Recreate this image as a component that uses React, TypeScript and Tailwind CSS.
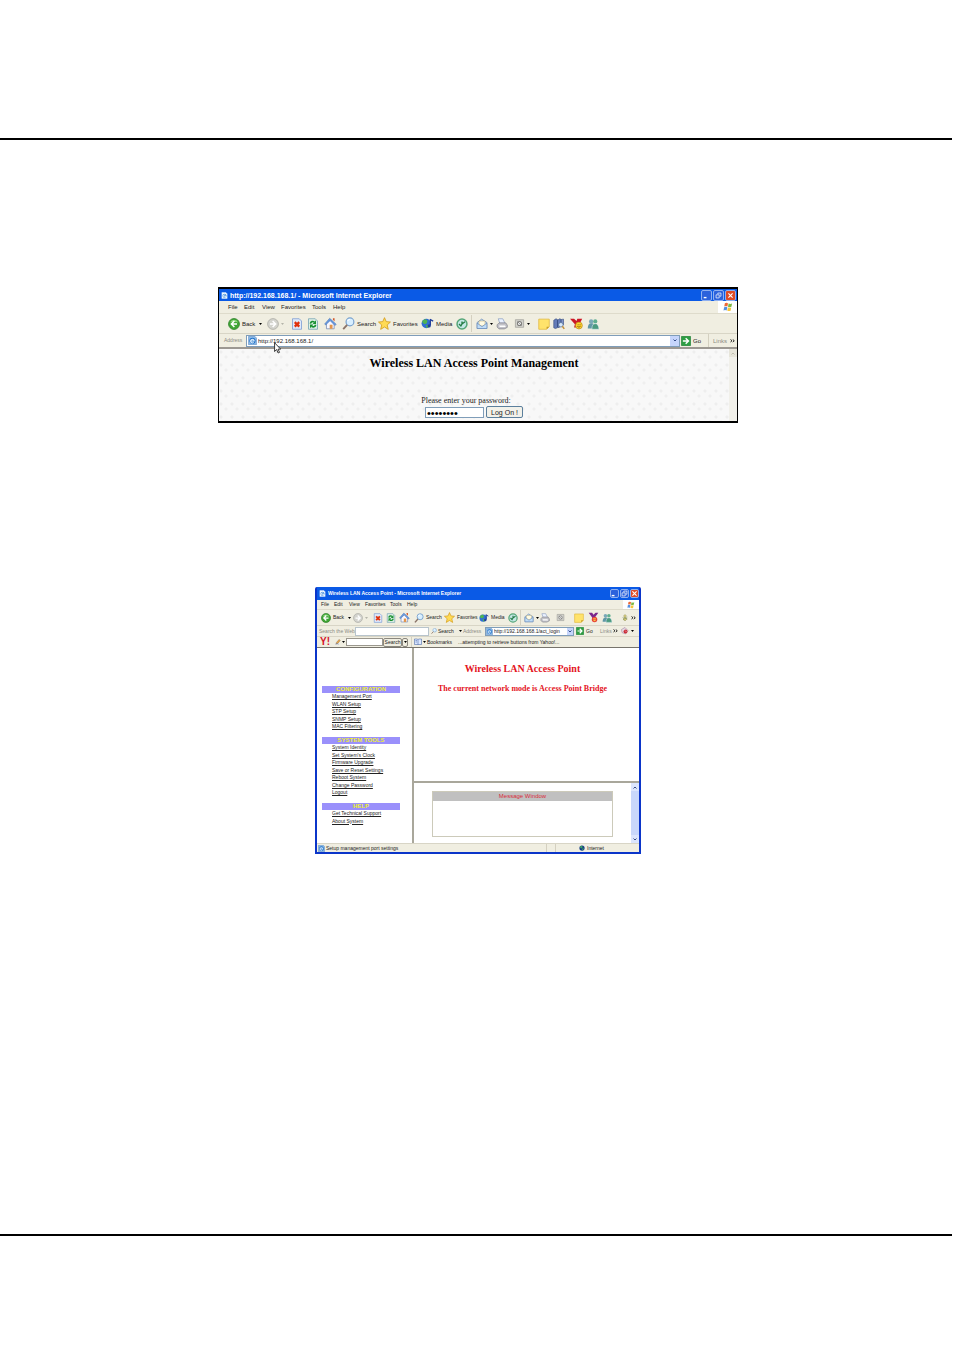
import React from "react";

type IconName =
  | "page" | "ie" | "back" | "forward" | "stop" | "refresh" | "home" | "search" | "star" | "media"
  | "history" | "mail" | "print" | "edit" | "note" | "book" | "yahoo" | "messenger" | "flower"
  | "go" | "flag" | "globe" | "pencil" | "yhead" | "bookmark" | "tomato";

const drawings: Record<IconName, React.ReactNode> = {
  page: (
    <>
      <path d="M2 1h9l3 3v11H2z" fill="#f4fbff" stroke="#d9ecff" />
      <circle cx="8" cy="8.500" r="4.500" fill="#2f7fd6" />
      <path d="M5 9h6M11 9a3 3 0 1 1-1-3M9 11.500h2" stroke="#fff" strokeWidth="1.500" fill="none" />
    </>
  ),
  ie: (
    <>
      <path d="M1 .5h11l3 3v12H1z" fill="#8fbbe8" stroke="#4f83bd" />
      <circle cx="8" cy="8.500" r="5.500" fill="#2474c9" />
      <path d="M4.500 9h7M11 9a3.200 3.200 0 1 0-1 2.500" stroke="#e8f5ff" strokeWidth="1.800" fill="none" />
    </>
  ),
  back: (
    <>
      <circle cx="8" cy="8" r="7.300" fill="#3fa535" stroke="#2b7f28" />
      <path d="M2.500 6a6 6 0 0 1 11 0c-3-1.500-8-1.500-11 0z" fill="#8fd67e" />
      <path d="M8.500 4L4.500 8l4 4M5 8h7" stroke="#fff" strokeWidth="2" fill="none" />
    </>
  ),
  forward: (
    <>
      <circle cx="8" cy="8" r="7.200" fill="#d3d3cd" stroke="#aaaaa3" />
      <path d="M7.500 4l4 4-4 4M11 8H4" stroke="#fff" strokeWidth="2" fill="none" />
    </>
  ),
  stop: (
    <>
      <path d="M2 1h9l3 3v11H2z" fill="#dfe9fb" stroke="#7497d2" />
      <path d="M5 5.500l6 6M11 5.500l-6 6" stroke="#e0300c" strokeWidth="3" />
    </>
  ),
  refresh: (
    <>
      <path d="M2 1h9l3 3v11H2z" fill="#dff0e6" stroke="#6f9fb0" />
      <path d="M4.500 7.500C5 4.500 8 4 10 5.500M11.500 9c-.5 3-3.500 3.500-5.500 2" stroke="#189030" strokeWidth="2.200" fill="none" />
      <path d="M12 3v5H7.500zM4 13.500v-5h4.500z" fill="#189030" />
    </>
  ),
  home: (
    <>
      <path d="M3 8v6.500h9.500V8L8 3z" fill="#f7f7ff" stroke="#7b8fb5" />
      <path d="M.8 8.500L7 1.500l8 7.500-1.500 1.500L7.500 4.500 2 9.800z" fill="#6a9be0" stroke="#3f6cb0" strokeWidth=".6" />
      <path d="M11 1.500h2v4l-2-2z" fill="#d2572c" />
      <path d="M7 9.500h3.500v5H7z" fill="#e3954a" />
    </>
  ),
  search: (
    <>
      <circle cx="9.800" cy="6" r="4.800" fill="#d8efff" stroke="#7aa3cf" strokeWidth="1.500" />
      <path d="M6.300 9.700L1.500 15" stroke="#8a7468" strokeWidth="2.300" />
      <path d="M7 5a3 3 0 0 1 3-2" stroke="#fff" strokeWidth="1.300" fill="none" />
    </>
  ),
  star: <path d="M8 .8l2.100 4.900 5.200.5-4 3.600 1.300 5.400L8 12.300l-4.700 2.900 1.300-5.400-4-3.600 5.300-.5z" fill="#ffdb55" stroke="#d39b19" />,
  media: (
    <>
      <circle cx="6.500" cy="8" r="5.800" fill="#2f6fd2" />
      <path d="M1.500 5l3.500-2.500 3 2L7 8 4 8.500 2 7zM6 10l4-.5-1 3.500-2 .5z" fill="#4fb550" />
      <path d="M11.500 2.500v8M11 3l4 2" stroke="#23409c" strokeWidth="1.600" />
      <circle cx="10" cy="11" r="2" fill="#23409c" />
    </>
  ),
  history: (
    <>
      <circle cx="8" cy="8" r="6.600" fill="#c4e8e6" stroke="#55a678" strokeWidth="2" />
      <path d="M8 4.500V8l4-3M4 8l2.500 2.500L8 8" stroke="#247b44" strokeWidth="1.800" fill="none" />
    </>
  ),
  mail: (
    <>
      <path d="M1.500 6l6-4.500L14.500 6v8h-13z" fill="#b7d8f5" stroke="#6384b4" />
      <path d="M4 4h8v5l-4 2-4-2z" fill="#fffbe3" stroke="#bba770" strokeWidth=".7" />
      <path d="M1.500 7L8 11.500 14.500 7v7h-13z" fill="#bfdcf7" stroke="#6384b4" strokeWidth=".8" />
    </>
  ),
  print: (
    <>
      <path d="M3 1h6l3 6H5z" fill="#eaf1ff" stroke="#8da0c0" />
      <path d="M1.500 9L4 6.500h9l2 3v3l-4 2H4l-2.500-2.500z" fill="#c2c2c8" stroke="#84848c" />
      <path d="M4 10h8l1 2H5z" fill="#fff" />
    </>
  ),
  edit: (
    <>
      <path d="M2 2.500h12v11H2z" fill="#d2d2cc" stroke="#9a9a94" />
      <circle cx="8" cy="8" r="3" fill="#eee" stroke="#7e7e7a" strokeWidth="1.500" />
      <path d="M5 5l6 6" stroke="#777" />
    </>
  ),
  note: (
    <>
      <path d="M1 1.500h14v10L11.500 15H1z" fill="#ffe36b" stroke="#e0b739" />
      <path d="M11.500 15v-3.500H15z" fill="#c79b27" />
    </>
  ),
  book: (
    <>
      <path d="M1 3l3-2 2 1v11l-3 1-2-1zM6 3l3-2 2 1v8l-3 3-2-1z" fill="#637bb8" stroke="#33497d" strokeWidth=".8" />
      <path d="M11 2l3-.5V9l-3 1z" fill="#8094cb" stroke="#33497d" strokeWidth=".8" />
      <circle cx="10.500" cy="9" r="3" fill="#d9eafa" stroke="#536d94" />
      <path d="M12.500 11l2.500 3.500" stroke="#c4913b" strokeWidth="2" />
    </>
  ),
  yahoo: (
    <>
      <path d="M0 2h5l3 3 1-3h6l-3 6-5 5H5l1-4z" fill="#cc1726" />
      <circle cx="11" cy="10.500" r="4.200" fill="#ffd52e" stroke="#b58112" strokeWidth=".8" />
      <path d="M10 9v1.200M12.400 9v1.200M9 11.500q2 2 4 0" stroke="#71500d" fill="none" />
    </>
  ),
  messenger: (
    <>
      <circle cx="5.500" cy="4.500" r="2.900" fill="#7aa9b8" />
      <path d="M1 14q0-7 5-7t4 7z" fill="#5f97a5" />
      <circle cx="11" cy="4.500" r="2.800" fill="#5fae90" />
      <path d="M6.500 15q0-7.500 4.500-7.500t5 7.500z" fill="#4b9a80" stroke="#e8f4ff" strokeWidth=".7" />
    </>
  ),
  flower: (
    <>
      <path d="M8 1l3 3-3 3-3-3zM8 6l4 4-4 4-4-4z" fill="#dacb72" stroke="#8c9262" />
      <path d="M3 7l10 3M13 6L4 12" stroke="#83925a" />
    </>
  ),
  go: (
    <>
      <rect x=".5" y=".5" width="15" height="15" rx="1" fill="#2e9e43" stroke="#1d7b32" />
      <path d="M3 8h8M7.500 3.500L12 8l-4.500 4.500" stroke="#fff" strokeWidth="2.300" fill="none" />
    </>
  ),
  flag: (
    <>
      <path d="M3 2q3-1.500 5 .2L7 7.300Q5 5.800 2 7z" fill="#ef6834" />
      <path d="M9 2.500q3 1.500 5.500 0l-1 5.200q-3 1.400-5.500-.2z" fill="#7db945" />
      <path d="M1.800 8.200q3-1.500 5 .2l-1 5.300q-2-1.500-5-.3z" fill="#538fe0" />
      <path d="M7.800 8.700q3 1.500 5.400 0l-1 5.200q-3 1.300-5.400-.2z" fill="#f5c63c" />
    </>
  ),
  globe: (
    <>
      <circle cx="8" cy="8" r="7" fill="#173e88" />
      <path d="M3 4l4-2 3 3-3 4-4-2zM9 9l4-1-2 5-3 1z" fill="#3ca463" />
    </>
  ),
  pencil: (
    <>
      <path d="M3 13l1-4 7-8 3 3-7 8z" fill="#e8a548" stroke="#79572d" />
      <path d="M1 14q5-3 9 0" stroke="#5e78c0" strokeWidth="1.500" fill="none" />
    </>
  ),
  yhead: (
    <>
      <path d="M1 1h5l2 3 3-3h4l-5 7v5H6V8z" fill="#7b268c" />
      <circle cx="9.500" cy="11" r="4" fill="#e74438" />
      <path d="M7.500 10h4M8 12.500h3" stroke="#ffe34d" strokeWidth="1.300" />
    </>
  ),
  bookmark: (
    <>
      <path d="M1 2h6l1 1 1-1h6v11H9l-1 1-1-1H1z" fill="#dce7ff" stroke="#32549e" />
      <path d="M8 3v11M3 5h3M3 8h3" stroke="#32549e" />
    </>
  ),
  tomato: (
    <>
      <path d="M1 5l7-4 6 6-5 7-7-3z" fill="#e4e0ea" stroke="#9c6c8d" />
      <circle cx="9" cy="9" r="4" fill="#cb2d38" />
      <path d="M8 7l3 3" stroke="#fff" />
    </>
  ),
};

function Icon({ name, className = "size-3" }: { name: IconName; className?: string }) {
  return (
    <svg viewBox="0 0 16 16" aria-hidden="true" className={`shrink-0 ${className}`}>
      {drawings[name]}
    </svg>
  );
}

function Caret({ className = "text-black" }: { className?: string }) {
  return (
    <svg viewBox="0 0 6 4" aria-hidden="true" className={`h-0.5 w-[3px] shrink-0 ${className}`}>
      <path d="M0 0h6L3 4z" fill="currentColor" />
    </svg>
  );
}

function Chevron({ className = "" }: { className?: string }) {
  return (
    <svg viewBox="0 0 8 6" aria-hidden="true" className={`h-[3px] w-1 ${className}`}>
      <path d="M1 1l3 3 3-3" stroke="#334b86" strokeWidth="2" fill="none" />
    </svg>
  );
}

function More() {
  return (
    <svg viewBox="0 0 10 8" aria-hidden="true" className="h-1 w-[5px] shrink-0">
      <path d="M1 1l3 2.500L1 6M5.500 1l3 2.500-3 2.500" stroke="#111" strokeWidth="1.800" fill="none" />
    </svg>
  );
}

type ToolProps = { icon: IconName; width: string; size: string; label: string; text?: boolean; arrow?: "dark" | "light" };

function Tool({ icon, width, size, label, text, arrow }: ToolProps) {
  return (
    <button aria-label={label} className={`flex shrink-0 items-center whitespace-nowrap ${width}`}>
      <Icon name={icon} className={size} />
      {text && <span className="pl-0.5">{label}</span>}
      {arrow && <span className={text ? "pl-1" : "pl-0.5"}><Caret className={arrow === "dark" ? "text-black" : "text-[#b5b5aa]"} /></span>}
    </button>
  );
}

function CaptionButtons({ size }: { size: string }) {
  const base = `flex items-center justify-center rounded-xs border border-[#8fb0f0] ${size}`;
  return (
    <div className="flex shrink-0 gap-px">
      <button aria-label="Minimize" className={`${base} bg-[#2c62dc]`}>
        <svg viewBox="0 0 10 10" className="size-[7px]"><path d="M1 8h4" stroke="#fff" strokeWidth="2" /></svg>
      </button>
      <button aria-label="Restore" className={`${base} bg-[#2c62dc]`}>
        <svg viewBox="0 0 10 10" className="size-[7px]"><path d="M4 3V1.500h4.500V6H7M1.500 4H6v4.500H1.500z" stroke="#fff" fill="none" /></svg>
      </button>
      <button aria-label="Close" className={`${base} bg-[#df4b25]`}>
        <svg viewBox="0 0 10 10" className="size-[7px]"><path d="M2 2l6 6M8 2L2 8" stroke="#fff" strokeWidth="1.600" /></svg>
      </button>
    </div>
  );
}

function Separator() {
  return <span className="h-full w-px shrink-0 bg-[#d4d0c0]" />;
}

const menuItems = [
  { label: "File", wide: "w-4", narrow: "w-[13px]" },
  { label: "Edit", wide: "w-[18px]", narrow: "w-[15px]" },
  { label: "View", wide: "w-[19px]", narrow: "w-4" },
  { label: "Favorites", wide: "w-[31px]", narrow: "w-[25px]" },
  { label: "Tools", wide: "w-[21px]", narrow: "w-[17px]" },
  { label: "Help", wide: "w-4", narrow: "w-4" },
];

const wideTools: ToolProps[] = [
  { icon: "back", width: "w-[39px]", size: "size-3", label: "Back", text: true, arrow: "dark" },
  { icon: "forward", width: "w-6", size: "size-3", label: "Forward", arrow: "light" },
  { icon: "stop", width: "w-4", size: "size-3", label: "Stop" },
  { icon: "refresh", width: "w-[17px]", size: "size-3", label: "Refresh" },
  { icon: "home", width: "w-[18px]", size: "size-[13px]", label: "Home" },
  { icon: "search", width: "w-9", size: "size-[13px]", label: "Search", text: true },
  { icon: "star", width: "w-[43px]", size: "size-[13px]", label: "Favorites", text: true },
  { icon: "media", width: "w-[35px]", size: "size-[13px]", label: "Media", text: true },
  { icon: "history", width: "w-[15px]", size: "size-3", label: "History" },
];

const wideExtras: ToolProps[] = [
  { icon: "mail", width: "w-5", size: "size-3", label: "Mail", arrow: "dark" },
  { icon: "print", width: "w-[18px]", size: "size-3", label: "Print" },
  { icon: "edit", width: "w-6", size: "size-[11px]", label: "Edit", arrow: "dark" },
  { icon: "note", width: "w-[15px]", size: "size-3", label: "Discuss" },
  { icon: "book", width: "w-[17px]", size: "size-3", label: "Research" },
  { icon: "yahoo", width: "w-[17px]", size: "size-[13px]", label: "Yahoo! Messenger" },
  { icon: "messenger", width: "w-4", size: "size-3", label: "Messenger" },
];

const narrowTools: ToolProps[] = [
  { icon: "back", width: "w-8", size: "size-2.5", label: "Back", text: true, arrow: "dark" },
  { icon: "forward", width: "w-5", size: "size-2.5", label: "Forward", arrow: "light" },
  { icon: "stop", width: "w-[13px]", size: "size-2.5", label: "Stop" },
  { icon: "refresh", width: "w-[13px]", size: "size-2.5", label: "Refresh" },
  { icon: "home", width: "w-[15px]", size: "size-[11px]", label: "Home" },
  { icon: "search", width: "w-[30px]", size: "size-2.5", label: "Search", text: true },
  { icon: "star", width: "w-[35px]", size: "size-[11px]", label: "Favorites", text: true },
  { icon: "media", width: "w-[29px]", size: "size-2.5", label: "Media", text: true },
  { icon: "history", width: "w-3", size: "size-2.5", label: "History" },
];

const narrowExtras: ToolProps[] = [
  { icon: "mail", width: "w-4", size: "size-2.5", label: "Mail", arrow: "dark" },
  { icon: "print", width: "w-4", size: "size-2.5", label: "Print" },
  { icon: "edit", width: "w-[18px]", size: "size-[9px]", label: "Edit" },
  { icon: "note", width: "w-3.5", size: "size-2.5", label: "Discuss" },
  { icon: "yhead", width: "w-3.5", size: "size-[11px]", label: "Yahoo! Messenger" },
  { icon: "messenger", width: "w-[19px]", size: "size-2.5", label: "Messenger" },
  { icon: "flower", width: "w-2.5", size: "size-2", label: "ICQ" },
];

function LoginWindow() {
  return (
    <section className="relative flex w-[520px] max-w-full flex-col overflow-hidden border-x border-y-2 border-black bg-[#f0eee1] font-['Liberation_Sans',sans-serif] text-[6px] leading-none text-[#222]">
      <header className="flex h-3 items-center gap-0.5 bg-[#0a5ae6] pr-px pl-0.5 text-white">
        <Icon name="page" className="size-[7px]" />
        <h2 className="grow text-[7px] font-bold whitespace-nowrap">http://192.168.168.1/ - Microsoft Internet Explorer</h2>
        <CaptionButtons size="size-[11px]" />
      </header>
      <nav className="flex h-[13px] items-center border-b border-[#dedbcb] pl-[9px]">
        {menuItems.map((m) => (
          <button key={m.label} className={`shrink-0 text-left ${m.wide}`}>{m.label}</button>
        ))}
        <span className="ml-auto flex h-full w-[19px] items-center justify-center bg-white"><Icon name="flag" className="size-2.5" /></span>
      </nav>
      <div className="flex h-5 items-center border-b border-[#d8d5c6] py-px pl-[9px]">
        {wideTools.map((t) => <Tool key={t.icon} {...t} />)}
        <Separator />
        <span className="w-1" />
        {wideExtras.map((t) => <Tool key={t.icon} {...t} />)}
      </div>
      <div className="flex h-[13px] items-center pr-0.5 pl-[5px]">
        <label htmlFor="login-address" className="w-[22px] text-[5px] text-[#8b8b83]">Address</label>
        <div className="flex h-3 grow items-center border border-[#7f9db9] bg-white pl-px">
          <Icon name="ie" className="size-[9px]" />
          <input id="login-address" defaultValue="http://192.168.168.1/" className="min-w-0 grow bg-transparent pl-px outline-none" />
          <button aria-label="Show address list" className="flex h-2.5 w-[9px] items-center justify-center bg-[#c6d5fb]"><Chevron /></button>
        </div>
        <button className="flex w-7 items-center gap-0.5 pl-px"><Icon name="go" className="size-2.5" />Go</button>
        <Separator />
        <span className="w-[21px] pl-1 text-[#8b8b83]">Links</span>
        <More />
      </div>
      <div className="flex h-[74px] border-t-2 border-[#9c9892] bg-[#f8f8f8] bg-[radial-gradient(circle_at_2px_3px,#eeeeee_1px,transparent_2px),radial-gradient(circle_at_7px_8px,#efefef_1px,transparent_2px)] bg-size-[11px_13px] font-['Liberation_Serif',serif]">
        <form className="flex grow flex-col items-center" onSubmit={(e) => e.preventDefault()}>
          <h1 className="pt-[7px] text-[12px] leading-[14px] font-bold whitespace-nowrap text-black">Wireless LAN Access Point Management</h1>
          <label htmlFor="password" className="mt-[26px] mr-4 text-[8px] leading-[9px]">Please enter your password:</label>
          <div className="mt-px flex gap-0.5">
            <input id="password" type="password" defaultValue="password" className="my-px h-[11px] w-[59px] border border-[#7f9db9] bg-white px-px font-['Liberation_Sans',sans-serif] text-[11px] text-black outline-none" />
            <button className="h-3 w-[37px] rounded-xs border border-[#5b7f9c] bg-[#f2f1ea] font-['Liberation_Sans',sans-serif] text-[7px] leading-none">Log On !</button>
          </div>
        </form>
        <div className="w-2 bg-[#f1f0ea]">
          <button aria-label="Scroll up" className="flex h-2 w-2 items-center justify-center bg-[#e7e5da]">
            <svg viewBox="0 0 8 6" className="h-[3px] w-1"><path d="M1 5l3-3 3 3" stroke="#c2bfb0" strokeWidth="2" fill="none" /></svg>
          </button>
        </div>
      </div>
      <svg viewBox="0 0 12 20" aria-hidden="true" className="absolute top-[53px] left-[55px] h-3 w-[7px]">
        <path d="M1 1v15l3.500-3.500L7 18.500l2.500-1L7 12h4.500z" fill="#fff" stroke="#222" strokeWidth="1.500" />
      </svg>
    </section>
  );
}

const menuGroups = [
  { title: "CONFIGURATION", height: "h-[38px]", items: ["Management Port", "WLAN Setup", "STP Setup", "SNMP Setup", "MAC Filtering"] },
  { title: "SYSTEM TOOLS", height: "h-[53px]", items: ["System Identity", "Set System's Clock", "Firmware Upgrade", "Save or Reset Settings", "Reboot System", "Change Password", "Logout"] },
  { title: "HELP", height: "h-[15px]", items: ["Get Technical Support", "About System"] },
];

function ManagementWindow() {
  return (
    <section className="flex w-[326px] max-w-full flex-col overflow-hidden rounded-t-xs border-x-2 border-b-2 border-[#0b35c9] bg-[#f0eee1] font-['Liberation_Sans',sans-serif] text-[5px] leading-none text-[#222]">
      <header className="flex h-[13px] items-center gap-0.5 bg-[#0a5ae6] pl-0.5 text-white">
        <Icon name="page" className="size-[7px]" />
        <h2 className="grow text-[5px] font-bold whitespace-nowrap">Wireless LAN Access Point - Microsoft Internet Explorer</h2>
        <CaptionButtons size="size-[9px]" />
      </header>
      <nav className="flex h-2.5 items-center border-b border-[#dedbcb] pl-1">
        {menuItems.map((m) => (
          <button key={m.label} className={`shrink-0 text-left ${m.narrow}`}>{m.label}</button>
        ))}
        <span className="ml-auto flex h-full w-4 items-center justify-center bg-white"><Icon name="flag" className="size-2" /></span>
      </nav>
      <div className="flex h-4 items-center border-b border-[#d8d5c6] pl-1">
        {narrowTools.map((t) => <Tool key={t.icon} {...t} />)}
        <Separator />
        <span className="w-[3px]" />
        {narrowExtras.map((t) => <Tool key={t.icon} {...t} />)}
        <More />
      </div>
      <div className="flex h-[11px] items-center border-b border-[#d8d5c6] pl-0.5">
        <label htmlFor="web-search" className="w-9 whitespace-nowrap text-[#8b8b83]">Search the Web</label>
        <input id="web-search" className="h-[9px] w-[74px] border border-[#b8c4cc] bg-white outline-none" />
        <button className="flex w-[34px] items-center gap-px pl-0.5"><Icon name="search" className="size-1.5" />Search<span className="pl-1"><Caret /></span></button>
        <label htmlFor="mode-address" className="w-[22px] text-[#8b8b83]">Address</label>
        <div className="flex h-[9px] min-w-0 grow items-center border border-[#7f9db9] bg-white">
          <Icon name="ie" className="size-[7px]" />
          <input id="mode-address" defaultValue="http://192.168.168.1/act_login" className="min-w-0 grow bg-transparent pl-px outline-none" />
          <button aria-label="Show address list" className="flex h-[7px] w-1.5 items-center justify-center bg-[#c6d5fb]"><Chevron /></button>
        </div>
        <button className="flex w-[26px] items-center gap-0.5 pl-0.5"><Icon name="go" className="size-2" />Go</button>
        <span className="w-[13px] text-[#8b8b83]">Links</span>
        <span className="w-2"><More /></span>
        <button aria-label="Norton" className="flex w-[18px] items-center gap-0.5"><Icon name="tomato" className="size-2" /><Caret /></button>
      </div>
      <div className="flex h-2.5 items-center pl-[3px]">
        <span className="w-[15px] text-[10px] font-bold text-[#d6142a]">Y!</span>
        <button aria-label="Highlight" className="flex w-[11px] items-center gap-px"><Icon name="pencil" className="size-1.5" /><Caret /></button>
        <input aria-label="Yahoo search" className="h-2 w-[37px] border border-[#9a978e] bg-white outline-none" />
        <button className="h-[9px] w-[19px] rounded-xs border border-[#8a877e]">Search</button>
        <button aria-label="Search options" className="flex h-[9px] w-1.5 items-center justify-center rounded-xs border border-[#8a877e]"><Caret /></button>
        <span className="w-[3px]" />
        <Separator />
        <button className="flex items-center gap-px pl-0.5"><Icon name="bookmark" className="size-2" /><Caret />Bookmarks</button>
        <span className="pl-1.5">...attempting to retrieve buttons from Yahoo!...</span>
      </div>
      <div className="flex h-[196px] border-t border-[#77746c] bg-white">
        <nav className="w-[95px] shrink-0 pt-[38px] pr-3 pl-[5px]">
          {menuGroups.map((g) => (
            <div key={g.title} className="mb-1.5">
              <h3 className="h-[7px] bg-[#9a90fb] text-center text-[6px] leading-[7px] font-bold text-[#eff02c]">{g.title}</h3>
              <ul className={`grid pl-2.5 leading-[7px] ${g.height}`}>
                {g.items.map((item) => (
                  <li key={item}><a href="#" className="whitespace-nowrap underline">{item}</a></li>
                ))}
              </ul>
            </div>
          ))}
        </nav>
        <div className="flex min-w-0 grow flex-col border-l-2 border-[#a9a79b]">
          <main className="grow pt-[15px] pr-2 text-center font-['Liberation_Serif',serif] font-bold text-[#e4131d]">
            <h1 className="text-[10px] leading-3">Wireless LAN Access Point</h1>
            <p className="pt-2.5 text-[8px] leading-2">The current network mode is Access Point Bridge</p>
          </main>
          <div className="flex h-[62px] border-t-2 border-[#a9a79b]">
            <div className="grow px-[18px] pt-2">
              <div className="h-[46px] border border-[#cccaba]">
                <h3 className="h-[9px] bg-[#c0c0c0] text-center text-[6px] leading-[9px] text-[#d92c3b]">Message Window</h3>
              </div>
            </div>
            <div className="flex w-2 flex-col justify-between bg-[#c8d7fb]">
              <button aria-label="Scroll up" className="flex h-2 items-center justify-center bg-[#dbe5fd]"><Chevron className="rotate-180" /></button>
              <button aria-label="Scroll down" className="flex h-2 items-center justify-center bg-[#dbe5fd]"><Chevron /></button>
            </div>
          </div>
        </div>
      </div>
      <footer className="flex h-[9px] items-center border-t border-[#d8d5c6] pl-px">
        <Icon name="ie" className="size-[7px]" />
        <span className="grow pl-px">Setup management port settings</span>
        <Separator />
        <span className="w-2" />
        <Separator />
        <span className="w-[23px]" />
        <span className="flex w-[60px] items-center gap-0.5"><Icon name="globe" className="size-1.5" />Internet</span>
      </footer>
    </section>
  );
}

export default function App() {
  return (
    <div className="mr-0.5 bg-white pt-[138px] pb-[119px]">
      <div className="border-y-2 border-black pt-[147px] pb-[380px]">
        <div className="flex flex-col items-center gap-[164px] pl-1">
          <LoginWindow />
          <ManagementWindow />
        </div>
      </div>
    </div>
  );
}
